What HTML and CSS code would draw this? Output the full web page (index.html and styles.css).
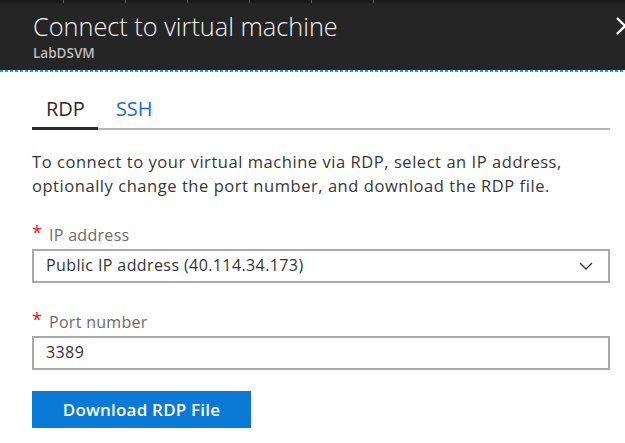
FILE: index.html
```html
<!DOCTYPE html>
<html lang="en">
<head>
<meta charset="utf-8">
<title>Connect to virtual machine</title>
<link rel="stylesheet" href="styles.css">
</head>
<body>
<div class="blade">
  <div class="tabstrip">
    <span class="strip-item w1"></span>
    <span class="strip-item"></span>
    <span class="strip-item"></span>
    <span class="strip-item"></span>
    <span class="strip-item"></span>
    <span class="strip-item"></span>
  </div>
  <header class="header">
    <h1 class="title">Connect to virtual machine</h1>
    <div class="subtitle">LabDSVM</div>
    <svg class="close" width="18" height="18" viewBox="0 0 18 18" aria-hidden="true">
      <path d="M1 1 L17 17 M17 1 L1 17" stroke="#ffffff" stroke-width="2.4" fill="none"/>
    </svg>
  </header>
  <div class="dash"></div>
  <main class="content">
    <nav class="tabs">
      <span class="tab active">RDP</span>
      <span class="tab link">SSH</span>
    </nav>
    <p class="desc">To connect to your virtual machine via RDP, select an IP address, optionally change the port number, and download the RDP file.</p>
    <div class="field">
      <div class="label"><span class="req">*</span>IP address</div>
      <div class="box select">
        <span>Public IP address (40.114.34.173)</span>
        <svg class="chev" width="14" height="8" viewBox="0 0 14 8" aria-hidden="true">
          <path d="M1 1 L7 7 L13 1" stroke="#333" stroke-width="1.4" fill="none"/>
        </svg>
      </div>
    </div>
    <div class="field port">
      <div class="label"><span class="req">*</span>Port number</div>
      <div class="box">3389</div>
    </div>
    <button class="btn">Download RDP File</button>
  </main>
</div>
</body>
</html>
```
FILE: styles.css
```css
html, body {
  margin: 0;
  padding: 0;
  background: #ffffff;
  overflow: hidden;
}
body {
  font-family: "Open Sans", "Noto Sans", sans-serif;
  color: #333333;
}
.blade {
  width: 625px;
  height: 443px;
  overflow: hidden;
  position: relative;
}
.tabstrip {
  height: 3px;
  background: #1b1b1b;
  display: flex;
}
.strip-item {
  width: 61px;
  border-right: 1px solid #5a5a5a;
}
.strip-item.w1 {
  width: 63px;
}
.header {
  height: 67px;
  background: #252525;
  padding-left: 33px;
  box-sizing: border-box;
  position: relative;
}
.title {
  margin: 0;
  padding-top: 8px;
  font-weight: 300;
  font-size: 25.3px;
  line-height: 30px;
  color: #f2f2f2;
}
.subtitle {
  font-size: 13.5px;
  font-weight: 600;
  color: #bdbdbd;
  line-height: 16px;
  margin-top: 4px;
}
.close {
  position: absolute;
  left: 616px;
  top: 14px;
}
.dash {
  height: 2px;
  background: repeating-linear-gradient(90deg, #1ea0e6 0 3px, #ffffff 3px 5px);
}
.content {
  padding: 0 15px 0 32px;
}
.tabs {
  display: flex;
  margin-top: 22px;
  border-bottom: 2px solid #b5b5b5;
  height: 36px;
  box-sizing: border-box;
}
.tab {
  font-size: 20px;
  line-height: 28px;
  padding: 1px 13px 0 14px;
}
.tab.active {
  color: #2b2b2b;
  border-bottom: 3px solid #2b2b2b;
  margin-bottom: -2px;
}
.tab.link {
  color: #1b6ac9;
  padding-left: 18px;
}
.desc {
  margin: 20px 0 0;
  font-size: 16.5px;
  letter-spacing: 0.55px;
  line-height: 24px;
  color: #363636;
}
.field {
  margin-top: 26px;
}
.field.port {
  margin-top: 28px;
}
.label {
  font-size: 16px;
  letter-spacing: 0.3px;
  line-height: 22px;
  color: #6b6b6b;
  display: flex;
  align-items: flex-start;
}
.req {
  color: #e81123;
  font-size: 18px;
  line-height: 18px;
  width: 17px;
  margin-top: -1px;
  letter-spacing: 0;
}
.box {
  margin-top: 3px;
  height: 34px;
  border: 2px solid #a9a9a9;
  box-sizing: border-box;
  padding: 0 14px 2px 12px;
  font-size: 16px;
  letter-spacing: 0.4px;
  line-height: 28px;
  color: #333333;
  display: flex;
  align-items: center;
  justify-content: space-between;
}
.chev {
  margin-right: 1px;
  margin-top: 2px;
}
.btn {
  display: block;
  margin-top: 21px;
  width: 219px;
  height: 37px;
  border: 0;
  background: #0a78d5;
  color: #ffffff;
  font-family: "Open Sans", "Noto Sans", sans-serif;
  font-weight: 600;
  font-size: 17px;
  letter-spacing: 0.2px;
  padding: 0;
}
```
